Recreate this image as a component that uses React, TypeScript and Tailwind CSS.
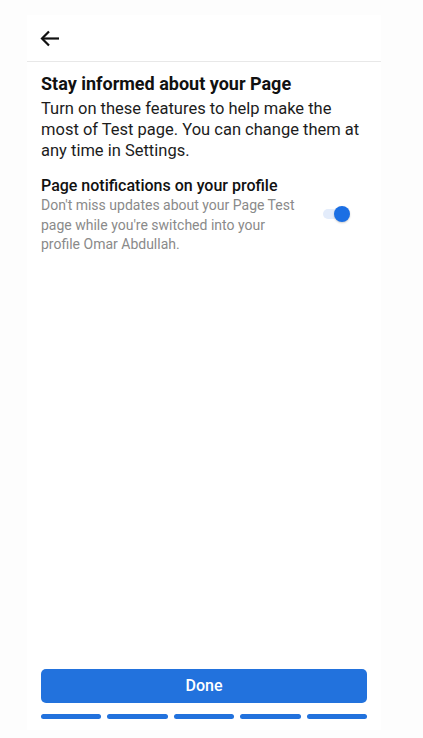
import React from "react";

export default function App() {
  const font = { fontFamily: "Roboto, 'Noto Sans', sans-serif" };
  return (
    <div className="h-[738px] w-[423px] bg-[#fdfdfd] pt-[15px]" style={font}>
      <div className="ml-[27px] flex h-[715px] w-[354px] flex-col bg-white">
        <div className="flex h-[47px] items-center border-b border-[#e8e8e8] pl-[13px]">
          <svg width="20" height="17" viewBox="0 0 20 17" fill="none">
            <path d="M19 8.5H2" stroke="#111" strokeWidth="2.2" />
            <path d="M9 1.5L2 8.5L9 15.5" stroke="#111" strokeWidth="2.2" strokeLinejoin="miter" />
          </svg>
        </div>
        <div className="flex flex-1 flex-col px-[14px] pt-[10px]">
          <h1 className="text-[18px] font-bold leading-[24px] text-[#111]">Stay informed about your Page</h1>
          <p className="mt-[2px] text-[16.5px] leading-[21px] text-[#1c1c1c]">
            Turn on these features to help make the most of Test page. You can change them at any time in Settings.
          </p>
          <div className="mt-[15px] flex items-center justify-between">
            <div className="w-[265px]">
              <div className="text-[16px] font-medium leading-[20px] text-[#111]">Page notifications on your profile</div>
              <div className="text-[14px] leading-[19.5px] text-[#8a8a8a]">
                Don't miss updates about your Page Test page while you're switched into your profile Omar Abdullah.
              </div>
            </div>
            <div className="relative mr-[22px] mb-[2px] h-[10px] w-[22px] rounded-full bg-[#e3ecfb]">
              <div className="absolute right-[-5px] top-[-3px] h-[16px] w-[16px] rounded-full bg-[#1b6fe4] shadow-[0_1px_2px_rgba(0,0,0,0.2)]" />
            </div>
          </div>
          <div className="flex-1" />
          <button className="h-[34px] w-full rounded-[5px] bg-[#2272dd] text-[16px] font-medium text-white">Done</button>
          <div className="mt-[11px] mb-[11px] flex gap-[6px]">
            {[0, 1, 2, 3, 4].map((i) => (
              <div key={i} className="h-[5px] flex-1 rounded-full bg-[#2272dd]" />
            ))}
          </div>
        </div>
      </div>
    </div>
  );
}
